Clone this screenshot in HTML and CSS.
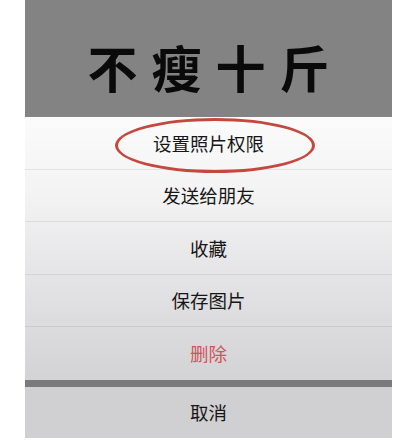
FILE: index.html
```html
<!DOCTYPE html>
<html lang="zh">
<head>
<meta charset="utf-8">
<link rel="stylesheet" href="styles.css">
</head>
<body>
<div class="screen">
  <div class="header"><span class="title">不瘦十斤</span></div>
  <div class="sheet">
    <div class="item first">设置照片权限<span class="ring"></span></div>
    <div class="item">发送给朋友</div>
    <div class="item">收藏</div>
    <div class="item">保存图片</div>
    <div class="item danger last">删除</div>
  </div>
  <div class="gap"></div>
  <div class="item cancel">取消</div>
</div>
</body>
</html>
```
FILE: styles.css
```css
html, body {
  margin: 0;
  padding: 0;
  background: #ffffff;
}
body {
  font-family: "Noto Sans CJK SC", "Noto Sans", sans-serif;
}
.screen {
  width: 367px;
  margin-left: 25px;
}
.header {
  height: 117px;
  background: #848384;
  display: flex;
  align-items: center;
  justify-content: center;
}
.title {
  font-size: 50px;
  font-weight: 700;
  color: #0a0a0a;
  letter-spacing: 14px;
  padding-left: 14px;
  line-height: 1;
  margin-top: 15px;
}
.sheet {
  background: linear-gradient(180deg, #fbfbfb 0%, #f3f3f4 30%, #e2e1e3 65%, #d3d2d4 100%);
}
.item {
  position: relative;
  display: flex;
  align-items: center;
  justify-content: center;
  font-size: 18.5px;
  color: #161616;
  border-bottom: 1px solid rgba(0, 0, 0, 0.07);
  box-sizing: border-box;
  height: 52.5px;
}
.item.last {
  border-bottom: none;
}
.danger {
  color: #d2545a;
}
.gap {
  height: 7px;
  background: #7b7a7b;
}
.cancel {
  height: 51px;
  background: #d0cfd1;
  border-bottom: none;
}
.ring {
  position: absolute;
  left: 90px;
  top: 1px;
  width: 194px;
  height: 49px;
  border: 3px solid #c4483d;
  border-radius: 50%;
}
```
